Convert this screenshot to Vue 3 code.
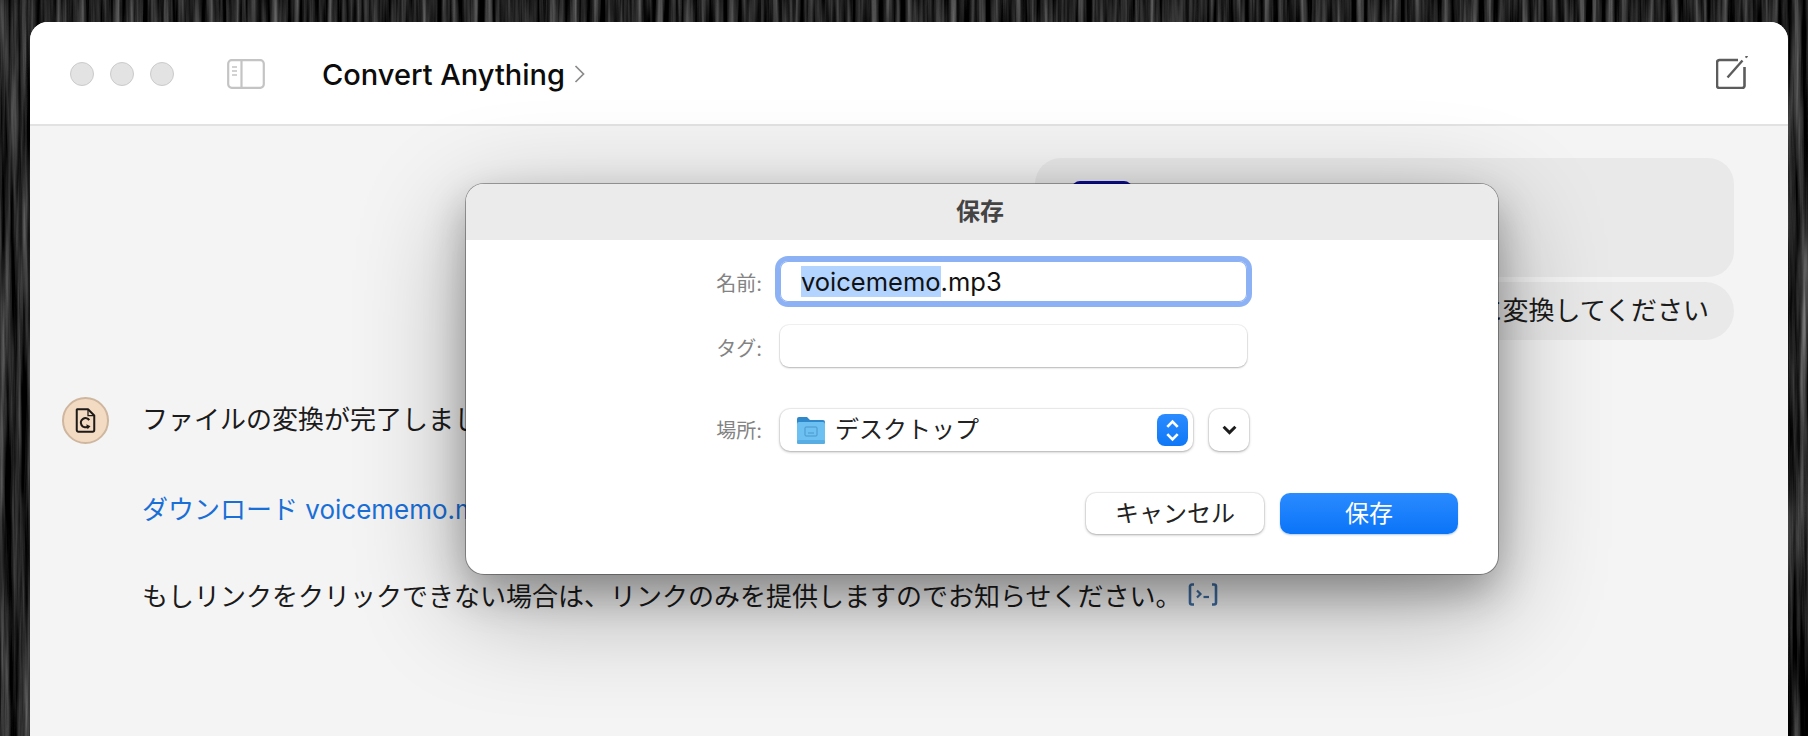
<template>
  <div class="page">
    <svg class="grain" width="100%" height="100%">
      <filter id="wood" x="0" y="0" width="100%" height="100%" color-interpolation-filters="sRGB">
        <feTurbulence type="fractalNoise" baseFrequency="0.14 0.005" numOctaves="4" seed="7" />
        <feColorMatrix type="matrix" values="0.800 0 0 0 -0.270  0.800 0 0 0 -0.270  0.800 0 0 0 -0.270  0 0 0 0 1" />
      </filter>
      <rect width="100%" height="100%" filter="url(#wood)" />
    </svg>
    <div class="window">
      <header class="titlebar">
        <div class="lights">
          <span class="light"></span>
          <span class="light"></span>
          <span class="light"></span>
        </div>
        <svg class="sidebar-icon" width="38" height="30" viewBox="0 0 38 30" fill="none">
          <rect x="1.2" y="1.2" width="35.6" height="27.6" rx="3.5" stroke="#c4c4c4" stroke-width="2.2" />
          <path d="M14.5 1.5V28.5" stroke="#c4c4c4" stroke-width="2.2" />
          <path d="M5 8h5M5 12h5M5 16h5" stroke="#c4c4c4" stroke-width="1.6" />
        </svg>
        <h1 class="app-title">Convert Anything</h1>
        <svg class="title-chevron" width="11" height="18" viewBox="0 0 11 18" fill="none">
          <path d="M1.5 1l8 8-8 8" stroke="#8a8a8a" stroke-width="1.7" />
        </svg>
        <svg class="compose-icon" width="33" height="33" viewBox="0 0 33 33" fill="none">
          <path d="M22 4H3.500A2.500 2.500 0 0 0 1 6.500V30a2.500 2.500 0 0 0 2.500 2H26a2.500 2.500 0 0 0 2.500-2V11" stroke="#5c5c5c" stroke-width="2.600" />
          <path d="M11.500 21.500L26.500 4.500" stroke="#5c5c5c" stroke-width="2.400" />
          <path d="M29.500 1.500L31.500 0" stroke="#5c5c5c" stroke-width="2" />
        </svg>
      </header>

      <main class="chat">
        <div class="bubble file-bubble">
          <div class="file-thumb"></div>
        </div>
        <div class="bubble text-bubble">mp3に変換してください</div>

        <div class="reply">
          <div class="avatar">
            <svg width="25" height="30" viewBox="0 0 25 30" fill="none">
              <path d="M2.500 1.500H15.500L23 9V26.500A2 2 0 0 1 21 28.500H4A2 2 0 0 1 2 26.500V2Z" stroke="#1d1a17" stroke-width="2.400" stroke-linejoin="round" />
              <path d="M15.500 1.500V9H23" stroke="#1d1a17" stroke-width="1.500" />
              <path d="M17 14.500A5.500 5.500 0 1 0 15 22.500" stroke="#1d1a17" stroke-width="2.600" />
              <path d="M13.500 19.500l5 2.500-3.500 3.500z" fill="#1d1a17" />
            </svg>
          </div>
          <div class="reply-body">
            <p>ファイルの変換が完了しました。以下のリンクからダウンロードできます。</p>
            <p><a class="link">ダウンロード voicememo.mp3</a></p>
            <p>
              もしリンクをクリックできない場合は、リンクのみを提供しますのでお知らせください。
              <svg class="code-icon" width="30" height="23" viewBox="0 0 30 23" fill="none">
                <path d="M6 1.500H4A2 2 0 0 0 2 3.500V19.500A2 2 0 0 0 4 21.500H6M24 1.500H26A2 2 0 0 1 28 3.500V19.500A2 2 0 0 1 26 21.500H24" stroke="#3f6c9f" stroke-width="2.600" />
                <path d="M9 7.500l3.500 3.500-3.500 3.500" stroke="#3f6c9f" stroke-width="2.200" />
                <path d="M15.500 14h5.500" stroke="#3f6c9f" stroke-width="2.200" />
              </svg>
            </p>
          </div>
        </div>
      </main>

      <section class="dialog">
        <div class="dialog-title">保存</div>
        <div class="dialog-body">
          <div class="row">
            <label>名前:</label>
            <div class="field focused"><span class="selected">voicememo</span>.mp3</div>
          </div>
          <div class="row">
            <label>タグ:</label>
            <div class="field"></div>
          </div>
          <div class="row where">
            <label>場所:</label>
            <div class="where-controls">
              <div class="popup">
                <svg class="folder" width="30" height="28" viewBox="0 0 30 28">
                  <path d="M1 3a2 2 0 0 1 2-2h8l3 3h13a2 2 0 0 1 2 2v5H1z" fill="#2f88c9" />
                  <rect x="1" y="6" width="28" height="22" rx="2" fill="#6cc0f2" />
                  <rect x="1" y="24" width="28" height="4" rx="1.500" fill="#58aee2" />
                  <rect x="9" y="11" width="12" height="9" rx="1" fill="none" stroke="#4b96cc" stroke-width="1" />
                  <path d="M12 17h6" stroke="#4b96cc" stroke-width="1" />
                </svg>
                <span class="popup-label">デスクトップ</span>
                <span class="stepper">
                  <svg width="15" height="25" viewBox="0 0 14 24" fill="none">
                    <path d="M2 8.500L7 3.500l5 5M2 15.500l5 5 5-5" stroke="#fff" stroke-width="2.600" />
                  </svg>
                </span>
              </div>
              <div class="expand">
                <svg width="15" height="10" viewBox="0 0 14 9" fill="none">
                  <path d="M1.500 1.500L7 7l5.500-5.500" stroke="#1c1c1c" stroke-width="2.800" />
                </svg>
              </div>
            </div>
          </div>
          <div class="actions">
            <button class="btn"><span>キャンセル</span></button>
            <button class="btn primary"><span>保存</span></button>
          </div>
        </div>
      </section>
    </div>
  </div>
</template>

<script setup>
</script>

<style>
html, body { margin: 0; overflow: hidden; }
</style>

<style scoped>
.page {
  position: relative;
  height: 736px;
  box-sizing: border-box;
  padding: 22px 20px 0 30px;
  background-color: #161616;
  font-family: Inter, "Noto Sans CJK JP", sans-serif;
  color: #1b1b1b;
}
.grain { position: absolute; inset: 0; }
.window {
  position: relative;
  height: 100%;
  background: #f4f4f5;
  border-radius: 18px 18px 0 0;
  overflow: hidden;
}
.titlebar {
  height: 104px;
  box-sizing: border-box;
  display: flex;
  align-items: center;
  padding: 2px 40px 0 40px;
  background: #fff;
  border-bottom: 2px solid #e2e2e2;
}
.lights { display: flex; gap: 16px; margin-right: 53px; }
.light {
  width: 24px;
  height: 24px;
  box-sizing: border-box;
  border-radius: 50%;
  background: #e3e3e3;
  border: 1px solid #cbcbcb;
}
.app-title {
  margin: 0 9px 0 57px;
  font-size: 29px;
  font-weight: 500;
  color: #0c0c0c;
  white-space: nowrap;
}
.compose-icon { margin-left: auto; margin-top: -4px; margin-right: -1px; }
.chat {
  display: flex;
  flex-direction: column;
  padding: 32px 54px 0 32px;
}
.bubble {
  align-self: flex-end;
  background: #e9e9e9;
  font-size: 26px;
}
.file-bubble {
  width: 699px;
  height: 119px;
  box-sizing: border-box;
  padding: 23px 0 0 37px;
  border-radius: 26px;
}
.file-thumb {
  width: 60px;
  height: 40px;
  background: #0b0b9c;
  border-radius: 8px;
}
.text-bubble {
  margin-top: 5px;
  height: 58px;
  line-height: 58px;
  padding: 0 25px;
  border-radius: 29px;
}
.reply {
  display: flex;
  gap: 33px;
  margin-top: 57px;
}
.avatar {
  width: 47px;
  height: 47px;
  box-sizing: border-box;
  flex: none;
  display: flex;
  align-items: center;
  justify-content: center;
  border-radius: 50%;
  background: #f3dac3;
  border: 2px solid #cfb69e;
}
.avatar svg { width: 21px; height: 25px; }
.reply-body { padding-top: 3px; font-size: 26px; line-height: 40px; }
.reply-body p { margin: 0 0 47px; white-space: nowrap; }
.reply-body p:first-child { margin-bottom: 50px; }
.link { color: #1a6fd6; }
.code-icon { vertical-align: 0; margin-left: -1px; }

.dialog {
  position: absolute;
  left: 436px;
  top: 162px;
  width: 1032px;
  box-sizing: border-box;
  background: #fff;
  border-radius: 18px;
  overflow: hidden;
  box-shadow:
    0 0 0 1px rgba(0,0,0,0.32),
    0 18px 40px rgba(0,0,0,0.28),
    0 30px 110px rgba(0,0,0,0.32);
}
.dialog-title {
  height: 56px;
  padding-right: 4px;
  line-height: 55px;
  text-align: center;
  background: #ebebeb;
  font-size: 24px;
  font-weight: 700;
  color: #444;
}
.dialog-body {
  display: flex;
  flex-direction: column;
  gap: 23px;
  padding: 21px 40px 40px 0;
}
.row {
  display: grid;
  grid-template-columns: 296px 1fr;
  column-gap: 18px;
  align-items: center;
}
.row label {
  padding-top: 2px;
  text-align: right;
  font-size: 20px;
  color: #838383;
}
.where label { padding: 0 0 2px; }
.field {
  width: 467px;
  height: 42px;
  box-sizing: border-box;
  border-radius: 9px;
  background: #fff;
  box-shadow: 0 0 0 1px rgba(0,0,0,0.05), 0 1px 2px rgba(0,0,0,0.25);
}
.field.focused {
  height: 41px;
  padding: 5px 0 0 21px;
  font-size: 25.500px;
  line-height: 32px;
  color: #111;
  box-shadow: 0 0 0 5px #8cb1f4, inset 0 0 0 1px #8cb1f4;
  border-radius: 8px;
}
.selected { background: #b3d4ff; }
.where { margin-top: 19px; }
.where-controls { display: flex; gap: 16px; }
.popup {
  width: 413px;
  height: 42px;
  flex: none;
  box-sizing: border-box;
  display: flex;
  align-items: center;
  padding: 0 5px 0 16px;
  background: #fff;
  border-radius: 10px;
  box-shadow: 0 0 0 1px rgba(0,0,0,0.05), 0 1px 3px rgba(0,0,0,0.3);
}
.popup-label { margin-left: 9px; padding-bottom: 5px; font-size: 24px; color: #222; }
.stepper {
  width: 31px;
  height: 32px;
  margin-left: auto;
  display: flex;
  align-items: center;
  justify-content: center;
  background: linear-gradient(#2b8bff, #0f78f6);
  border-radius: 8px;
}
.expand {
  width: 40px;
  height: 42px;
  flex: none;
  display: flex;
  align-items: center;
  justify-content: center;
  background: #fff;
  border-radius: 10px;
  box-shadow: 0 0 0 1px rgba(0,0,0,0.05), 0 1px 3px rgba(0,0,0,0.3);
}
.actions {
  display: flex;
  justify-content: flex-end;
  gap: 16px;
  margin-top: 19px;
}
.btn {
  width: 178px;
  height: 41px;
  padding: 0 0 4px;
  border: 0;
  border-radius: 10px;
  background: #fff;
  font-family: inherit;
  font-size: 24px;
  color: #222;
  box-shadow: 0 0 0 1px rgba(0,0,0,0.05), 0 1px 3px rgba(0,0,0,0.3);
}
.btn.primary {
  color: #fff;
  background: linear-gradient(#2b8bff, #0a74f8);
  box-shadow: 0 1px 2px rgba(0,80,200,0.3);
}
</style>
